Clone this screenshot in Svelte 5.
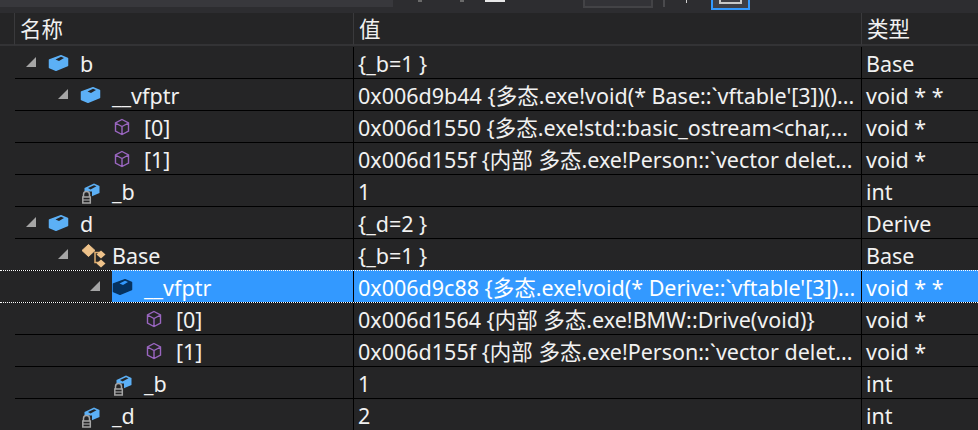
<script lang="ts">
  type Row = { depth: number; open?: boolean; icon: string; name: string; value: string; type: string; selected?: boolean };

  const rows: Row[] = [
    { depth: 0, open: true, icon: "object", name: "b", value: "{_b=1 }", type: "Base" },
    { depth: 1, open: true, icon: "object", name: "__vfptr", value: "0x006d9b44 {多态.exe!void(* Base::`vftable'[3])()...", type: "void * *" },
    { depth: 2, icon: "cube", name: "[0]", value: "0x006d1550 {多态.exe!std::basic_ostream<char,...", type: "void *" },
    { depth: 2, icon: "cube", name: "[1]", value: "0x006d155f {内部 多态.exe!Person::`vector delet...", type: "void *" },
    { depth: 1, icon: "private", name: "_b", value: "1", type: "int" },
    { depth: 0, open: true, icon: "object", name: "d", value: "{_d=2 }", type: "Derive" },
    { depth: 1, open: true, icon: "base", name: "Base", value: "{_b=1 }", type: "Base" },
    { depth: 2, open: true, icon: "object", name: "__vfptr", value: "0x006d9c88 {多态.exe!void(* Derive::`vftable'[3])...", type: "void * *", selected: true },
    { depth: 3, icon: "cube", name: "[0]", value: "0x006d1564 {内部 多态.exe!BMW::Drive(void)}", type: "void *" },
    { depth: 3, icon: "cube", name: "[1]", value: "0x006d155f {内部 多态.exe!Person::`vector delet...", type: "void *" },
    { depth: 2, icon: "private", name: "_b", value: "1", type: "int" },
    { depth: 1, icon: "private", name: "_d", value: "2", type: "int" },
  ];
</script>

<div class="watch">
  <div class="toolbar">
    <div class="tool-left"></div>
    <div class="tool-dot one"></div>
    <div class="tool-dot two"></div>
    <div class="tool-text"></div>
    <div class="tool-combo"></div>
    <div class="tool-sep"></div>
    <div class="tool-tick"></div>
    <div class="tool-toggle"><span></span></div>
  </div>

  <div class="row header">
    <div class="gutter"></div>
    <div class="cell name">名称</div>
    <div class="cell value">值</div>
    <div class="cell type">类型</div>
  </div>

  {#each rows as row}
    <div class="row" class:selected={row.selected}>
      <div class="gutter"></div>
      <div class="cell name">
        <div class="indent" style="width: {row.depth * 32}px"></div>
        <div class="arrow">
          {#if row.open}
            <svg width="10" height="10" viewBox="0 0 10 10"><path d="M10 0V10H0Z" fill="#a5a5a5" /></svg>
          {/if}
        </div>
        <div class="fill">
          <svg class="icon" width="20" height="20" viewBox="0 0 20 20">
            {#if row.icon === "object"}
              <path d="M1.500 7 13 2.800l6.500 2.700v7L8 17.200 1.500 14.500Z" fill={row.selected ? "#06325f" : "#5cb0f6"} stroke={row.selected ? "#06325f" : "#5cb0f6"} stroke-width="1.500" stroke-linejoin="round" />
              <path d="M7.500 6.500 13 3.800l3 1.200L11 8Z" fill={row.selected ? "#3399ff" : "#252526"} />
            {:else if row.icon === "cube"}
              <path d="M10 2.500 16.500 6v8L10 17.500 3.500 14V6Z M3.500 6 10 9.500 16.500 6 M10 9.500v8" fill="none" stroke="#9a66c0" stroke-width="1.400" />
            {:else if row.icon === "private"}
              <path d="M4.500 7 14 2.500l5.500 2.500v7L9 16.500 4.500 14Z" fill="#5cb0f6" />
              <path d="M8 7 14 4.300l2.500 1L10.500 8.500Z" fill="#252526" />
              <path d="M1 10.500h11V23H1Z" fill="#252526" />
              <path d="M3.500 16v-2.500a3 3 0 0 1 6 0V16" fill="none" stroke="#a5a5a5" stroke-width="1.500" />
              <rect x="2.800" y="16" width="7.500" height="6" fill="none" stroke="#a5a5a5" stroke-width="1.500" />
              <path d="M3 19h7" stroke="#a5a5a5" stroke-width="1.200" />
            {:else}
              <path d="M2 5.500 8.500 -0.500 15 5.500 8.500 11.500Z" fill="#eec28a" stroke="#eec28a" stroke-linejoin="round" />
              <path d="M20 7.500h-5v10h5" fill="none" stroke="#dfae70" stroke-width="1.500" />
              <path d="M16.500 9.500 21 5.500 25.500 9.500 21 13.500Z" fill="#eec28a" />
              <path d="M16.500 18.500 21 14.500 25.500 18.500 21 22.500Z" fill="#eec28a" />
            {/if}
          </svg>
          <span class="label">{row.name}</span>
        </div>
      </div>
      <div class="cell value">{row.value}</div>
      <div class="cell type">{row.type}</div>
    </div>
  {/each}
</div>

<style>
  :global(body) {
    margin: 0;
    background: #252526;
    overflow: hidden;
  }

  .watch {
    width: 978px;
    height: 430px;
    overflow: hidden;
    color: #f1f1f1;
    font-family: "Noto Sans", "Noto Sans CJK SC", sans-serif;
    font-size: 21.5px;
  }

  .toolbar {
    position: relative;
    height: 13px;
    background: #2d2d30;
  }

  .tool-left {
    position: absolute;
    left: 0;
    top: 0;
    width: 393px;
    height: 7px;
    background: #38383c;
  }

  .tool-dot {
    position: absolute;
    top: 0;
    width: 4px;
    height: 2px;
    background: #6a6a6a;
  }

  .tool-dot.one {
    left: 418px;
  }

  .tool-dot.two {
    left: 460px;
  }

  .tool-text {
    position: absolute;
    left: 485px;
    top: 0;
    width: 20px;
    height: 2px;
    background: #e8e8e8;
  }

  .tool-combo {
    position: absolute;
    left: 583px;
    top: 0;
    width: 70px;
    height: 8px;
    box-sizing: border-box;
    background: #333337;
    border: solid #434346;
    border-width: 0 2px 2px;
  }

  .tool-sep {
    position: absolute;
    left: 663px;
    top: 0;
    width: 2px;
    height: 7px;
    background: #4a4a4d;
  }

  .tool-tick {
    position: absolute;
    left: 686px;
    top: 0;
    width: 1px;
    height: 3px;
    background: #d0d0d0;
  }

  .tool-toggle {
    position: absolute;
    left: 711px;
    top: 0;
    width: 39px;
    height: 10px;
    box-sizing: border-box;
    background: #3f3f46;
    border: solid #3399ff;
    border-width: 0 2px 2px;
  }

  .tool-toggle span {
    display: block;
    box-sizing: border-box;
    width: 23px;
    height: 4px;
    margin-left: 6px;
    border: solid #c8c8c8;
    border-width: 0 2px 2px;
  }

  .row {
    display: flex;
    height: 32px;
    position: relative;
  }

  .gutter {
    width: 15px;
    flex: none;
  }

  .cell {
    box-sizing: border-box;
    height: 32px;
    padding-left: 4px;
    line-height: 34px;
    white-space: nowrap;
    overflow: hidden;
    border-bottom: 1px solid #000;
    border-right: 1px solid #000;
  }

  .cell.name {
    display: flex;
    align-items: center;
    width: 339px;
    flex: none;
    padding-left: 0;
  }

  .cell.value {
    width: 508px;
    flex: none;
  }

  .cell.type {
    flex: 1;
    border-right: 0;
  }

  .header {
    height: 33px;
    margin-bottom: 1px;
  }

  .header .gutter {
    border-right: 1px solid #3a3a3c;
    border-bottom: 2px solid #333335;
    box-sizing: border-box;
    height: 33px;
  }

  .header .cell {
    height: 33px;
    padding-left: 5px;
    line-height: 31px;
    border-bottom: 2px solid #333335;
    border-right-color: #3a3a3c;
  }

  .indent {
    flex: none;
  }

  .arrow {
    width: 10px;
    height: 10px;
    flex: none;
    margin: -2px 12px 0 11px;
    display: flex;
  }

  .fill {
    display: flex;
    align-items: center;
    flex: 1;
    height: 31px;
  }

  .icon {
    flex: none;
    overflow: visible;
  }

  .label {
    margin-left: 12px;
    line-height: 31px;
    padding-top: 2px;
  }

  .selected .cell {
    overflow: visible;
  }

  .selected .fill,
  .selected .cell.value,
  .selected .cell.type {
    background: #3399ff;
    background-clip: padding-box;
    box-shadow: 0 -1px 0 #3399ff;
    color: #fff;
  }

  .selected::after {
    content: "";
    position: absolute;
    left: 0;
    right: 0;
    top: -1px;
    bottom: 0;
    border-top: 1px dotted #fff;
    border-bottom: 1px dotted #fff;
    pointer-events: none;
  }
</style>
